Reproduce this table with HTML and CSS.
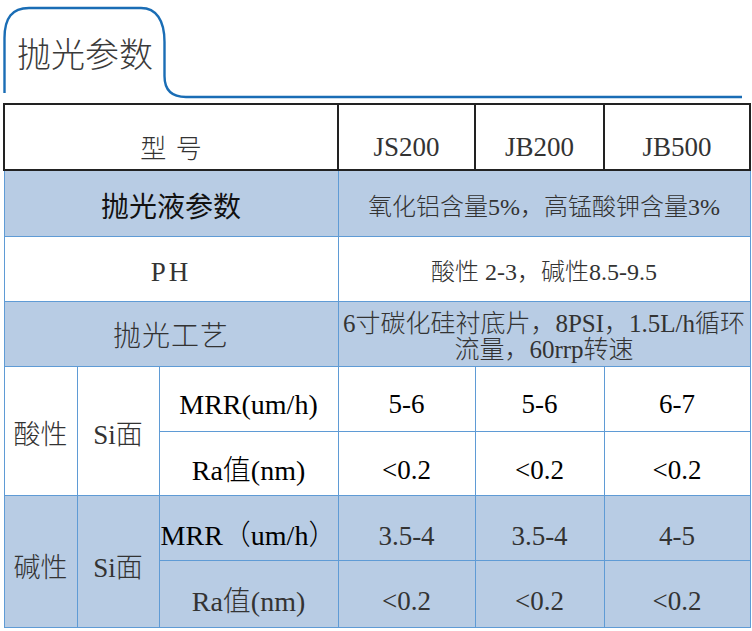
FILE: index.html
```html
<!DOCTYPE html>
<html lang="zh-CN">
<head>
<meta charset="utf-8">
<title>抛光参数</title>
<link rel="stylesheet" href="styles.css">
</head>
<body>
<div class="tabbar">
  <svg class="tab-outline" width="752" height="104" viewBox="0 0 752 104" aria-hidden="true">
    <path d="M4.5 93 L4.5 38 C4.5 18 12 8 29 8 L141 8 C156 8 164.5 20 164.5 42 L164.5 76 C164.5 90 172 97 186 97 L742 97" fill="none" stroke="#1a6db5" stroke-width="2.4"/>
  </svg>
  <h1 class="title">抛光参数</h1>
</div>
<table class="spec">
  <colgroup>
    <col class="c1"><col class="c2"><col class="c3"><col class="c4"><col class="c5"><col class="c6">
  </colgroup>
  <tr class="head">
    <th colspan="3" class="model">型 号</th>
    <th>JS200</th>
    <th>JB200</th>
    <th>JB500</th>
  </tr>
  <tr class="blue r2">
    <td colspan="3" class="label strong">抛光液参数</td>
    <td colspan="3" class="val">氧化铝含量5%，高锰酸钾含量3%</td>
  </tr>
  <tr class="r3">
    <td colspan="3" class="ph">PH</td>
    <td colspan="3" class="val">酸性 2-3，碱性8.5-9.5</td>
  </tr>
  <tr class="blue r4">
    <td colspan="3" class="label spaced">抛光工艺</td>
    <td colspan="3" class="val two">6寸碳化硅衬底片，8PSI，1.5L/h循环<br>流量，60rrp转速</td>
  </tr>
  <tr class="r5">
    <td rowspan="2" class="group g-acid">酸性</td>
    <td rowspan="2" class="group g-acid">Si面</td>
    <td class="param dark">MRR(um/h)</td>
    <td class="num dark">5-6</td>
    <td class="num dark">5-6</td>
    <td class="num dark">6-7</td>
  </tr>
  <tr class="r6">
    <td class="param dark">Ra值(nm)</td>
    <td class="num dark">&lt;0.2</td>
    <td class="num dark">&lt;0.2</td>
    <td class="num dark">&lt;0.2</td>
  </tr>
  <tr class="blue r7">
    <td rowspan="2" class="group g-base">碱性</td>
    <td rowspan="2" class="group g-base">Si面</td>
    <td class="param dark">MRR（um/h）</td>
    <td class="num">3.5-4</td>
    <td class="num">3.5-4</td>
    <td class="num">4-5</td>
  </tr>
  <tr class="blue r8">
    <td class="param">Ra值(nm)</td>
    <td class="num">&lt;0.2</td>
    <td class="num">&lt;0.2</td>
    <td class="num">&lt;0.2</td>
  </tr>
</table>
</body>
</html>
```

FILE: styles.css
```css
html, body {
  margin: 0;
  padding: 0;
  background: #ffffff;
}

.tabbar {
  position: relative;
  height: 103px;
}

.tab-outline {
  position: absolute;
  left: 0;
  top: 0;
  display: block;
}

.title {
  position: relative;
  margin: 0;
  padding: 36px 0 0 17px;
  font-family: "Noto Sans CJK SC", sans-serif;
  font-size: 34px;
  line-height: 34px;
  font-weight: 300;
  color: #3a3a3a;
}

.spec {
  border-collapse: collapse;
  table-layout: fixed;
  width: 747px;
  margin-left: 3px;
  font-family: "Liberation Serif", "Noto Sans CJK SC", serif;
  color: #333333;
}

.c1 { width: 73px; }
.c2 { width: 82px; }
.c3 { width: 179px; }
.c4 { width: 137px; }
.c5 { width: 129px; }
.c6 { width: 146px; }

.spec td,
.spec th {
  border: 1px solid #5f9bd5;
  padding: 0;
  text-align: center;
  vertical-align: middle;
  white-space: nowrap;
  line-height: 1.2;
  font-family: "Liberation Serif", "Noto Sans CJK SC", serif;
  font-weight: 300;
  overflow: visible;
}

.blue td {
  background: #b8cce4;
}

.head th {
  border: 2px solid #222222;
  height: 44px;
  padding-top: 20px;
  font-size: 27px;
  color: #333333;
}

.spec .model {
  font-family: "Noto Sans CJK SC", sans-serif;
  font-size: 26px;
  word-spacing: 4px;
}

.r2 td { height: 57px; padding-top: 8px; }
.r3 td { height: 57px; padding-top: 7px; }
.r4 td { height: 59px; padding-top: 5px; }
.r5 td { height: 53px; padding-top: 11px; }
.r6 td { height: 49px; padding-top: 14px; }
.r7 td { height: 48px; padding-top: 16px; }
.r8 td { height: 51px; padding-top: 15px; }

.label {
  font-size: 28px;
}

.spec .strong {
  color: #111111;
  font-weight: 400;
}

.spaced {
  letter-spacing: 1px;
}

.ph {
  font-size: 27px;
  letter-spacing: 3px;
}

.val {
  font-size: 24px;
}

.val.two {
  font-size: 25px;
  line-height: 26px;
}

.group {
  font-size: 27px;
}

.r5 .g-acid { padding-top: 9px; }
.r7 .g-base { padding-top: 14px; }

.param {
  font-size: 28px;
}

.num {
  font-size: 27px;
}

.dark {
  color: #000000;
}
```
